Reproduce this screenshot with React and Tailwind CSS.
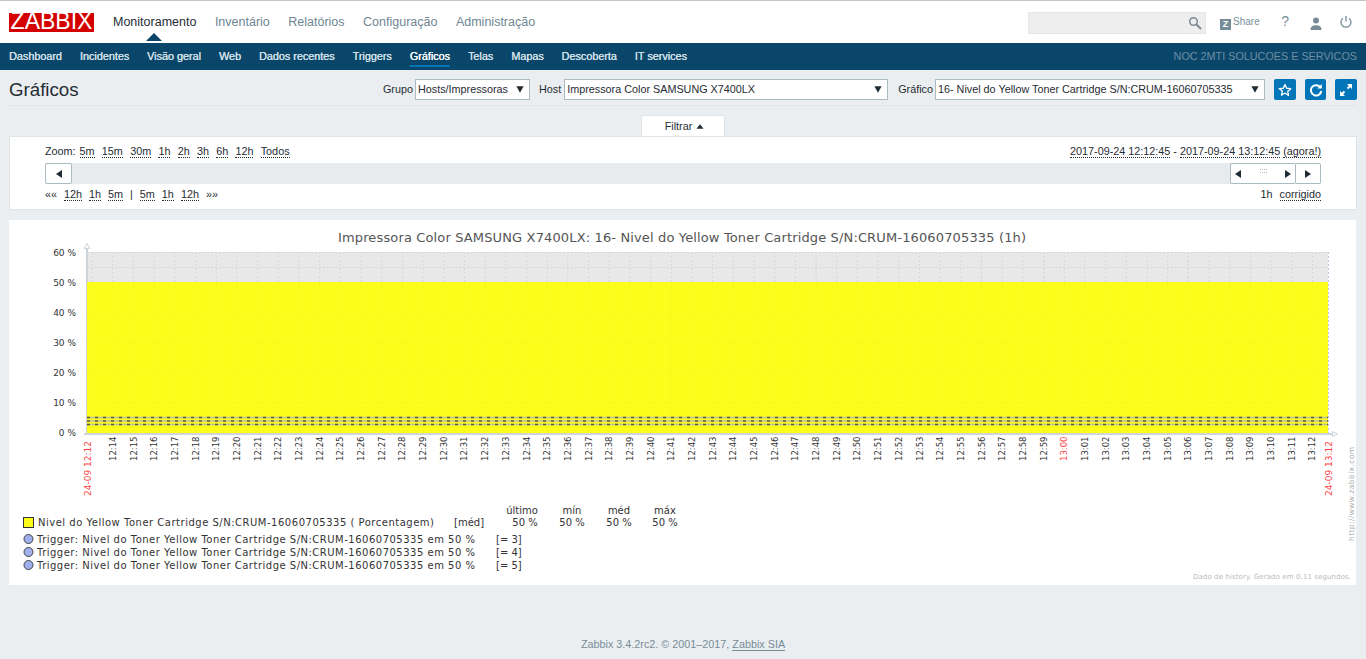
import React from "react";

const F = "font-['Liberation_Sans',Arial,sans-serif]";
const D = "'DejaVu Sans', sans-serif";

function Dot({ children, className = "" }) {
  return <span className={"border-b border-dotted border-[#1f2c33] leading-[12px] " + className}>{children}</span>;
}

function Tri({ dir, className = "" }) {
  const cls = {
    l: "border-y-[4px] border-y-transparent border-r-[6px] border-r-[#1f2c33]",
    r: "border-y-[4px] border-y-transparent border-l-[6px] border-l-[#1f2c33]",
    d: "border-x-[4px] border-x-transparent border-t-[7px] border-t-[#1f2c33]",
    u: "border-x-[4px] border-x-transparent border-b-[5px] border-b-[#1f2c33]",
  }[dir];
  return <span className={"inline-block w-0 h-0 " + cls + " " + className} />;
}

function Select({ w, children }) {
  return (
    <div className={"h-[21px] bg-white border border-[#acbbc2] flex items-center justify-between pl-[2px] pr-[5px] text-[10.8px] text-[#1f2c33] " + w}>
      <span className="whitespace-nowrap">{children}</span>
      <Tri dir="d" className="scale-90" />
    </div>
  );
}

function IconBtn({ w = "w-[22px]", children }) {
  return <div className={"h-[21px] bg-[#0275b8] rounded-[2px] flex items-center justify-center " + w}>{children}</div>;
}

function Chart() {
  const X0 = 87, X1 = 1328, Y0 = 252, Y1 = 433;
  const pm = (X1 - X0) / 60;
  const minutes = [];
  for (let i = 1; i <= 60; i++) {
    const t = 12 * 60 + 12 + i;
    const h = Math.floor(t / 60), m = t % 60;
    minutes.push({ x: X0 + (i - 0.75) * pm, label: h + ":" + String(m).padStart(2, "0"), full: m === 0, i });
  }
  const pct = [60, 50, 40, 30, 20, 10, 0];
  const tip = { fontSize: 10, fill: "#333" };
  return (
    <svg width="1347" height="365" viewBox="9 220 1347 365" className="block" style={{ fontFamily: D }}>
      <text x="338" y="241.5" fontSize="13" fill="#555" textLength="688">Impressora Color SAMSUNG X7400LX: 16- Nivel do Yellow Toner Cartridge S/N:CRUM-16060705335 (1h)</text>

      <rect x={X0} y={Y0} width={X1 - X0} height={Y1 - Y0} fill="#e8e8e8" />
      <line x1={87} x2={87} y1={247} y2={282} stroke="#cdd3d7" strokeWidth="2" />
      <line x1={86.5} x2={86.5} y1={282} y2={434} stroke="#cdd3d7" />
      <rect x={X0} y={282} width={X1 - X0} height={Y1 - 282} fill="#fdfd1c" />

      {minutes.map(m => (
        <g key={m.i}>
          <line x1={m.x} x2={m.x} y1={Y0} y2={282} stroke="#d3d7da" strokeDasharray="2 2" />
          <line x1={m.x} x2={m.x} y1={282} y2={Y1} stroke="#f6f61c" strokeDasharray="2 2" />
        </g>
      ))}
      <line x1={X0} x2={X1} y1={252.5} y2={252.5} stroke="#d3d7da" strokeDasharray="2 2" />
      <line x1={X0} x2={X1} y1={267.5} y2={267.5} stroke="#d3d7da" strokeDasharray="2 2" />
      {[312, 342, 372, 402].map(y => <line key={y} x1={X0} x2={X1} y1={y + 0.5} y2={y + 0.5} stroke="#f6f61c" strokeDasharray="2 2" />)}

      {[417.5, 421, 424.5].map(y => (
        <g key={y}>
          <line x1={X0} x2={X1} y1={y} y2={y} stroke="#bcc0a8" strokeWidth="1.5" />
          <line x1={X0} x2={X1} y1={y} y2={y} stroke="#5c5c30" strokeWidth="1.5" strokeDasharray="3 5" />
        </g>
      ))}

      <line x1={84} x2={1332} y1={434} y2={434} stroke="#ced4d8" strokeWidth="2" />
      <line x1={X1 + 0.5} x2={X1 + 0.5} y1={Y0} y2={Y1} stroke="#bcc8de" strokeDasharray="2 2" />
      <path d="M84.5 248.5 L87 243.5 L89.5 248.5 Z" fill="#fff" stroke="#cdd3d7" />
      <path d="M1332.5 431.5 L1337.5 434 L1332.5 436.5 Z" fill="#fff" stroke="#cdd3d7" />

      {pct.map((p, i) => (
        <text key={p} x="76" y={Y0 + i * 30 + 4} textAnchor="end" fontSize="9" fill="#333">{p} %</text>
      ))}
      {minutes.filter(m => m.label !== "12:13").map(m => (
        <text key={m.i} transform={`translate(${m.x + 3} 461) rotate(-90)`} fontSize="8.5" fill={m.full ? "#f44" : "#333"}>{m.label}</text>
      ))}
      <text transform="translate(91 496) rotate(-90)" fontSize="9" fill="#f44">24-09 12:12</text>
      <text transform="translate(1332 496) rotate(-90)" fontSize="9" fill="#f44">24-09 13:12</text>
      <text transform="translate(1354 541) rotate(-90)" fontSize="7.5" fill="#aaa" letterSpacing="0.4">http://www.zabbix.com</text>

      {[["último", 522], ["mín", 572], ["méd", 619], ["máx", 665]].map(([t, x]) => (
        <text key={t} x={x} y="513.5" textAnchor="middle" {...tip}>{t}</text>
      ))}
      <rect x="23.5" y="517.5" width="10" height="10" fill="#fdfd1c" stroke="#333" />
      <text x="38" y="526" textLength="396" {...tip}>Nivel do Yellow Toner Cartridge S/N:CRUM-16060705335 ( Porcentagem)</text>
      <text x="454" y="526" {...tip}>[méd]</text>
      {[525, 572, 619, 665].map(x => (
        <text key={x} x={x} y="526" textAnchor="middle" {...tip}>50 %</text>
      ))}
      {[[539, 3], [552, 4], [565, 5]].map(([y, n]) => (
        <g key={n}>
          <circle cx="28.5" cy={y} r="4.5" fill="#a0b0ee" stroke="#444" />
          <text x="37" y={y + 4} textLength="438" {...tip}>Trigger: Nivel do Toner Yellow Toner Cartridge S/N:CRUM-16060705335 em 50 %</text>
          <text x="496" y={y + 4} {...tip}>[= {n}]</text>
        </g>
      ))}
      <text x="1351" y="579" textAnchor="end" fontSize="7" fill="#bbb" textLength="158">Dado de history. Gerado em 0.11 segundos.</text>
    </svg>
  );
}

export default function App() {
  const main = ["Monitoramento", "Inventário", "Relatórios", "Configuração", "Administração"];
  const sub = ["Dashboard", "Incidentes", "Visão geral", "Web", "Dados recentes", "Triggers", "Gráficos", "Telas", "Mapas", "Descoberta", "IT services"];
  return (
    <div className={"w-[1366px] h-[659px] overflow-hidden bg-[#ebeef0] flex flex-col text-[#1f2c33] " + F}>
      <header className="h-[43px] bg-white border-t border-[#c4c4c4] flex items-center pl-[9px] pr-[14px]">
        <div className="w-[85px] h-[19px] bg-[#d40000] text-white text-[23px] leading-[16px] text-center">ZABBIX</div>
        <nav className="flex ml-[19px] gap-[18.5px] text-[12.5px] text-[#6f8692]">
          {main.map((m, i) => (
            <span key={m} className={i === 0 ? "text-[#1f2c33] relative" : ""}>
              {m}
              {i === 0 && <span className="absolute left-[33px] top-[20px] w-0 h-0 border-x-[8px] border-x-transparent border-b-[8px] border-b-[#0a466a]" />}
            </span>
          ))}
        </nav>
        <div className="ml-auto flex items-center">
          <div className="w-[178px] h-[22px] mt-[1px] bg-[#eeeeee] border border-[#e6e6e6] flex items-center justify-end pr-[3px] mr-[14px]">
            <svg width="14" height="14" viewBox="0 0 14 14" fill="none" stroke="#7c8a92" strokeWidth="1.5"><circle cx="5.5" cy="5.5" r="3.8" /><path d="M8.5 8.500L13 13" strokeWidth="2" /></svg>
          </div>
          <div className="w-[11px] h-[11px] bg-[#768d99] text-white text-[9px] font-bold leading-[11px] text-center mt-[5px]">Z</div>
          <span className="text-[10px] text-[#768d99] ml-[2px] -mt-[2px] mr-[21.5px]">Share</span>
          <span className="text-[14px] text-[#768d99] mr-[21px] -mt-[2px]">?</span>
          <svg width="12" height="13" viewBox="0 0 12 13" fill="#768d99" className="mr-[18px] mt-[2px]"><circle cx="6" cy="3.5" r="3" /><path d="M0.5 13c0-3.5 2-4.8 5.5-4.8s5.5 1.3 5.5 4.8z" /></svg>
          <svg width="12" height="13" viewBox="0 0 12 13" fill="none" stroke="#768d99" strokeWidth="1.3" className="-mt-[1px]"><path d="M3 3.200a5 5 0 1 0 6 0" /><path d="M6 1v5.500" /></svg>
        </div>
      </header>

      <div className="h-[27px] bg-[#0a466a] flex items-center pl-[9px] pr-[9px] text-[10.8px] font-medium">
        <nav className="flex gap-[18px] text-[#d3e0e8] [text-shadow:0.3px_0_0_currentColor]">
          {sub.map(s => (
            <span key={s} className={s === "Gráficos" ? "relative text-white" : ""}>
              {s}
              {s === "Gráficos" && <span className="absolute left-0 right-0 top-[17px] h-[2px] bg-[#0275b8]" />}
            </span>
          ))}
        </nav>
        <span className="ml-auto text-[#6d8ea3]">NOC 2MTI SOLUCOES E SERVICOS</span>
      </div>

      <main className="px-[9px] flex-1 flex flex-col">
        <div className="h-[36px] border-b border-[#dfe4e7] flex items-center pt-[4px] text-[10.8px]">
          <h1 className="text-[18.7px] font-normal text-[#1f2c33] pt-[1px]">Gráficos</h1>
          <div className="ml-auto flex items-center">
            <span className="mr-[2px]">Grupo</span>
            <Select w="w-[115px]">Hosts/Impressoras</Select>
            <span className="ml-[9px] mr-[3px]">Host</span>
            <Select w="w-[324px]">Impressora Color SAMSUNG X7400LX</Select>
            <span className="ml-[10px] mr-[2px]">Gráfico</span>
            <Select w="w-[330px]">16- Nivel do Yellow Toner Cartridge S/N:CRUM-16060705335</Select>
            <div className="flex gap-[9px] ml-[9px]">
              <IconBtn>
                <svg width="14" height="14" viewBox="0 0 24 24" fill="none" stroke="#fff" strokeWidth="2.2" strokeLinejoin="round"><path d="M12 2.500l2.900 6.500 7 .7-5.300 4.700 1.500 7L12 17.200 5.900 20.700l1.500-7L2.100 9.700l7-.7z" /></svg>
              </IconBtn>
              <IconBtn w="w-[21px]">
                <svg width="14" height="14" viewBox="0 0 14 14" fill="none" stroke="#fff" strokeWidth="2"><path d="M11.500 4.500A5.200 5.200 0 1 0 12.300 8" /><path d="M12.800 1v4.500H8.300z" fill="#fff" stroke="none" /></svg>
              </IconBtn>
              <IconBtn>
                <svg width="14" height="14" viewBox="0 0 14 14" fill="#fff"><path d="M8 1h5v5l-1.800-1.800-2 2-1.400-1.400 2-2zM6 13H1V8l1.800 1.800 2-2 1.400 1.400-2 2z" /></svg>
              </IconBtn>
            </div>
          </div>
        </div>

        <div className="flex justify-center mt-[9px]">
          <div className="w-[84px] h-[21px] bg-white border border-b-0 border-[#dfe4e7] flex items-center justify-center gap-[4px] pl-[3px] text-[10.8px]">
            Filtrar <Tri dir="u" className="scale-90" />
          </div>
        </div>

        <section className="h-[74px] w-[1348px] bg-white border border-[#dfe4e7] px-[35px] pt-[8px] text-[10.8px] flex flex-col">
          <div className="flex justify-between h-[13px] leading-[13px]">
            <div className="flex">
              <span className="mr-[4px]">Zoom:</span>
              <div className="flex gap-[7.25px]">
                {["5m", "15m", "30m", "1h", "2h", "3h", "6h", "12h", "Todos"].map(z => <Dot key={z}>{z}</Dot>)}
              </div>
            </div>
            <div>
              <Dot>2017-09-24 12:12:45</Dot> - <Dot>2017-09-24 13:12:45</Dot> <Dot>(agora!)</Dot>
            </div>
          </div>
          <div className="mt-[5px] h-[21px] bg-[#e8ebed] flex justify-between w-[1276px]">
            <div className="w-[27px] h-[21px] bg-white border border-[#acbbc2] rounded-[2px] flex items-center justify-center"><Tri dir="l" /></div>
            <div className="flex">
              <div className="w-[65px] h-[21px] bg-white border-y border-l border-[#acbbc2] rounded-l-[2px] flex items-center justify-between px-[4px]">
                <Tri dir="l" />
                <span className="grid grid-cols-[repeat(4,1px)] gap-[2px_1px] mb-[5px]">
                  {Array.from({ length: 8 }).map((_, i) => <span key={i} className="w-[1px] h-[1px] bg-[#acbbc2]" />)}
                </span>
                <Tri dir="r" />
              </div>
              <div className="w-[26px] h-[21px] bg-white border border-[#acbbc2] rounded-[2px] flex items-center justify-center"><Tri dir="r" /></div>
            </div>
          </div>
          <div className="flex justify-between mt-[4px] h-[13px] leading-[13px] w-[1276px]">
            <div className="flex gap-[7px]">
              <span>««</span>
              <Dot>12h</Dot><Dot>1h</Dot><Dot>5m</Dot><span>|</span><Dot>5m</Dot><Dot>1h</Dot><Dot>12h</Dot>
              <span>»»</span>
            </div>
            <div className="flex gap-[7px]"><span>1h</span><Dot>corrigido</Dot></div>
          </div>
        </section>

        <section className="mt-[10px] w-[1347px] h-[365px] bg-white overflow-hidden">
          <Chart />
        </section>

        <footer className="mt-[51px] text-center text-[10.8px] text-[#768d99]">
          Zabbix 3.4.2rc2. © 2001–2017, <span className="border-b border-[#768d99] leading-[12px]">Zabbix SIA</span>
        </footer>
      </main>
    </div>
  );
}
